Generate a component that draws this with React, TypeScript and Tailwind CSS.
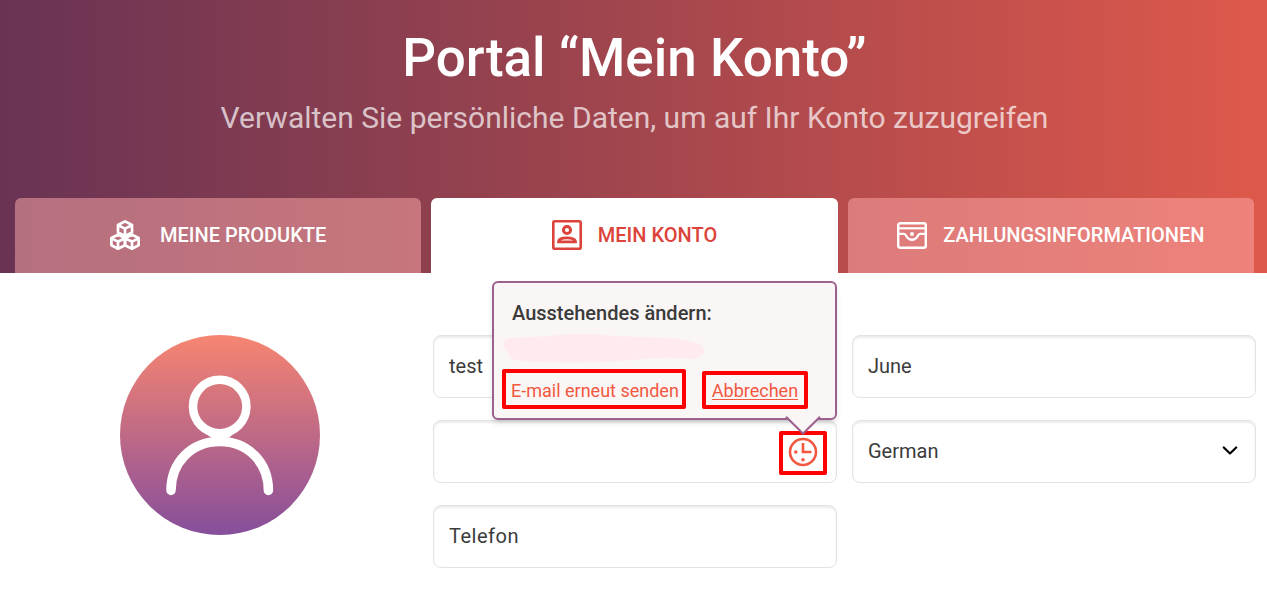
import type { ReactNode } from "react";

function BoxesIcon() {
  return (
    <svg className="size-[30px] shrink-0" viewBox="0 0 30 30" fill="none" stroke="currentColor" strokeWidth="2.700" strokeLinejoin="round" aria-hidden="true">
      <path d="M15 1.400 22 5V12.500L15 16 8 12.500V5Z" />
      <path d="M8 5.200 15 8.600 22 5.200M15 8.600V15.600" />
      <path d="M8 14.800 15 18V25.300L8 28.700 1.400 25.300V18Z" />
      <path d="M1.400 18.400 8 21.600 15 18.400M8 21.600V28.500" />
      <path d="M22 14.800 28.600 18V25.300L22 28.700 15 25.300V18Z" />
      <path d="M15 18.400 22 21.600 28.600 18.400M22 21.600V28.500" />
    </svg>
  );
}

function AccountIcon() {
  return (
    <svg className="size-[30px] shrink-0" viewBox="0 0 30 30" fill="none" stroke="currentColor" aria-hidden="true">
      <rect x="1.300" y="1.300" width="27.400" height="27.400" rx="1.500" strokeWidth="2.600" />
      <circle cx="15" cy="10" r="3.600" strokeWidth="3" />
      <path d="M6.500 21.800C6.500 19 11 17.900 15 17.900S23.500 19 23.500 21.800Z" strokeWidth="2.800" />
    </svg>
  );
}

function WalletIcon() {
  return (
    <svg className="size-[30px] shrink-0" viewBox="0 0 30 30" fill="none" stroke="currentColor" strokeWidth="2.400" aria-hidden="true">
      <rect x="1.200" y="3.200" width="27.600" height="24.600" rx="2" />
      <path d="M1.200 8.300H28.800" strokeWidth="2.200" />
      <path d="M1.200 13.900H7.200C9.500 13.900 9.200 19.700 15 19.700S20.500 13.900 22.800 13.900H28.800" />
      <circle cx="15" cy="14" r="2" fill="currentColor" stroke="none" />
    </svg>
  );
}

function ClockIcon() {
  return (
    <svg className="size-[30px]" viewBox="0 0 30 30" fill="none" stroke="currentColor" aria-hidden="true">
      <circle cx="15" cy="15" r="13" strokeWidth="2.600" />
      <path d="M15 6V15H23.500" strokeWidth="2.600" />
      <circle cx="7.800" cy="15" r="1.800" fill="currentColor" stroke="none" />
      <circle cx="15" cy="22.800" r="1.800" fill="currentColor" stroke="none" />
    </svg>
  );
}

function Avatar() {
  return (
    <svg className="size-[200px]" viewBox="0 0 200 200" fill="none" role="img" aria-label="Profilbild">
      <defs>
        <linearGradient id="avatar" x1="0" y1="0" x2="0" y2="1">
          <stop offset="0" stopColor="#f78571" />
          <stop offset="1" stopColor="#864e9b" />
        </linearGradient>
      </defs>
      <circle cx="100" cy="100" r="100" fill="url(#avatar)" />
      <g stroke="#fff" strokeLinecap="round">
        <circle cx="99.700" cy="71.500" r="26.700" strokeWidth="8.500" />
        <path d="M51 155.500C51 128 71 106.500 99.700 106.500S148.400 128 148.400 155.500" strokeWidth="9.500" />
      </g>
      <path d="M79 93 91 102.500 99.700 104 109 102.500 121 93 100 99Z" fill="#fff" />
    </svg>
  );
}

function Tab({ icon, active, children }: { icon: ReactNode; active?: boolean; children: ReactNode }) {
  return (
    <a
      href="#"
      aria-current={active ? "page" : undefined}
      className={
        "flex h-[75px] items-center justify-center rounded-t-md pb-0.5 text-xl font-medium " +
        (active ? "bg-white text-[#dc433b]" : "bg-[#ffaba9]/50 text-white")
      }
    >
      {icon}
      {children}
    </a>
  );
}

const field =
  "block h-[63px] w-full appearance-none rounded-lg border border-[#e3e3e3] bg-white px-[15px] pb-0.5 text-xl text-[#3b3b3b] shadow-[inset_0_2px_2px_rgba(0,0,0,0.08)] outline-none placeholder:tracking-wide placeholder:text-[#3b3b3b]";

function Popover() {
  return (
    <div className="absolute right-0 bottom-full h-[139px] w-[345px] rounded-md border-2 border-[#9d618d] bg-[#faf6f5] shadow-md">
      <p className="mt-4 pl-[18px] text-xl leading-7 font-medium text-[#3b3b3b]">Ausstehendes ändern:</p>
      <svg className="mt-1.5 ml-2 h-[30px] w-[203px]" viewBox="0 0 203 30" aria-hidden="true">
        <path d="M10 5 48 3Q75-1 115 3L165 5Q190 7 199 12C206 18 200 24 192 26Q160 23 130 27Q80 31 42 29L17 28Q7 27 6 19C-3 13 1 5 10 5Z" fill="#ffebed" />
      </svg>
      <div className="mt-1.5 ml-2 flex items-end gap-4 text-lg text-[#f2573f]">
        <button type="button" className="h-10 rounded-xs border-4 border-[#fe0000] pt-1 pr-[3px] pl-[5px] whitespace-nowrap">
          E-mail erneut senden
        </button>
        <button type="button" className="h-[38px] rounded-xs border-4 border-[#fe0000] px-1.5 pt-0.5 underline underline-offset-2">
          Abbrechen
        </button>
      </div>
      <svg className="absolute right-3 -bottom-[17px] h-[19px] w-10" viewBox="0 0 40 19" aria-hidden="true">
        <path d="M3 0H37L20 17Z" fill="#faf6f5" />
        <path d="M3 .8 20 17.500 37 .8" fill="none" stroke="#9d618d" strokeWidth="2" />
      </svg>
    </div>
  );
}

export default function App() {
  return (
    <div className="min-h-screen bg-white font-['Roboto',sans-serif]">
      <header className="bg-[linear-gradient(90deg,#693354_0%,#8f404f_34%,#b84c4c_68%,#de594b_100%)] pr-[13px] pl-[15px] text-center">
        <h1 className="pt-6 text-[53px] leading-[68px] font-medium text-white">Portal “Mein Konto”</h1>
        <p className="pt-1 text-[30px] leading-[44px] text-white/70">
          Verwalten Sie persönliche Daten, um auf Ihr Konto zuzugreifen
        </p>
        <nav className="mt-[58px] grid grid-cols-3 gap-2.5">
          <Tab icon={<span className="mr-5"><BoxesIcon /></span>}>MEINE PRODUKTE</Tab>
          <Tab icon={<span className="mr-4"><AccountIcon /></span>} active>MEIN KONTO</Tab>
          <Tab icon={<span className="mr-4"><WalletIcon /></span>}>ZAHLUNGSINFORMATIONEN</Tab>
        </nav>
      </header>

      <main className="grid grid-cols-3 gap-[15px] pt-[62px] pr-[11px] pb-[22px] pl-[14px]">
        <div className="flex items-start justify-center pl-2">
          <Avatar />
        </div>
        <form className="col-span-2 grid grid-cols-2 gap-x-[15px] gap-y-[22px]">
          <input className={field} aria-label="Vorname" defaultValue="test" />
          <input className={field} aria-label="Nachname" defaultValue="June" />
          <div className="relative">
            <input className={field} type="email" aria-label="E-Mail" />
            <button
              type="button"
              aria-label="Ausstehende Änderung"
              className="absolute top-[11px] right-2.5 flex h-11 w-12 items-center justify-center rounded-xs border-4 border-[#fe0000] pb-0.5 text-[#f2573f]"
            >
              <ClockIcon />
            </button>
            <Popover />
          </div>
          <div className="relative">
            <select className={field} aria-label="Sprache" defaultValue="German">
              <option>German</option>
            </select>
            <svg className="pointer-events-none absolute top-[26px] right-[18px] h-[10px] w-4" viewBox="0 0 16 10" fill="none" stroke="#000" strokeWidth="2.200" strokeLinecap="round" strokeLinejoin="round" aria-hidden="true">
              <path d="M1.800 1.500 8 7.500 14.200 1.500" />
            </svg>
          </div>
          <input className={field} type="tel" aria-label="Telefon" placeholder="Telefon" />
        </form>
      </main>
    </div>
  );
}
